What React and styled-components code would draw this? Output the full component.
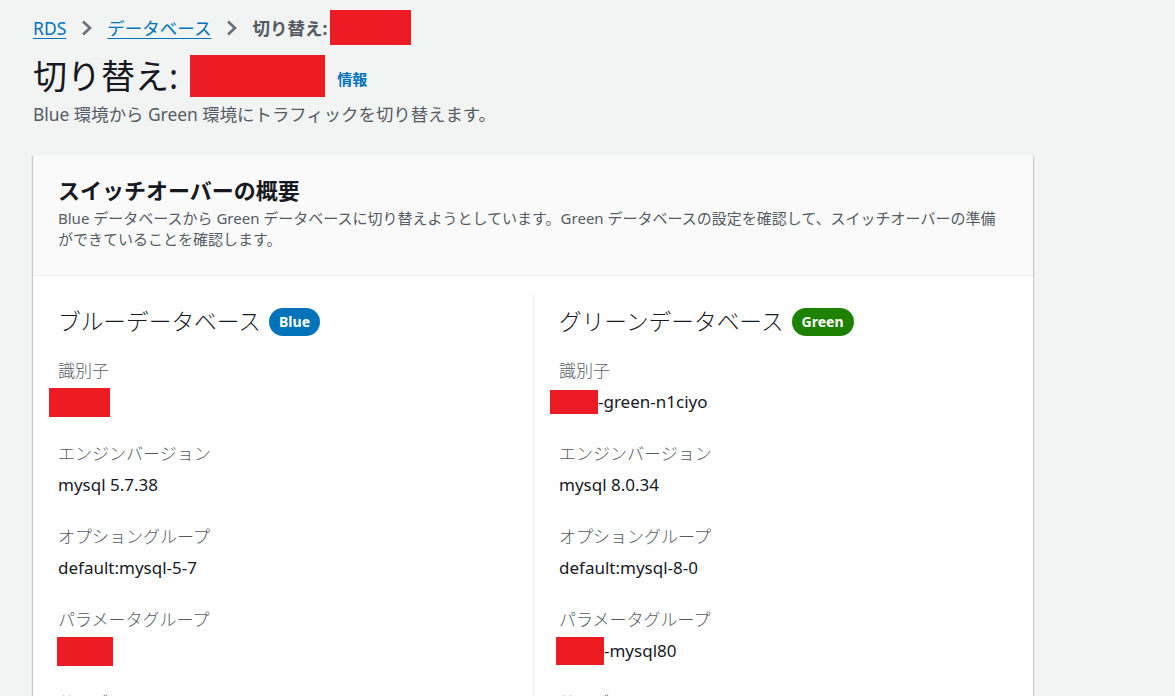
import React from 'react';
import styled, { createGlobalStyle } from 'styled-components';

const GlobalStyle = createGlobalStyle`
  html, body {
    margin: 0;
    padding: 0;
    overflow: hidden;
    background: #f2f3f3;
  }
  body {
    font-family: "Noto Sans", "Noto Sans CJK JP", sans-serif;
    color: #16191f;
  }
`;

const blue = {
  name: 'ブルーデータベース',
  badge: 'Blue',
  tone: '#0073bb',
  fields: [
    { label: '識別子', redact: { w: 61, h: 29, shift: -9 } },
    { label: 'エンジンバージョン', value: 'mysql 5.7.38' },
    { label: 'オプショングループ', value: 'default:mysql-5-7' },
    { label: 'パラメータグループ', redact: { w: 56, h: 29, shift: -1 } },
    { label: 'サイズ', value: 'db.t3.medium' },
  ],
};

const green = {
  name: 'グリーンデータベース',
  badge: 'Green',
  tone: '#1d8102',
  fields: [
    { label: '識別子', redact: { w: 48, h: 24, shift: -9 }, value: '-green-n1ciyo' },
    { label: 'エンジンバージョン', value: 'mysql 8.0.34' },
    { label: 'オプショングループ', value: 'default:mysql-8-0' },
    { label: 'パラメータグループ', redact: { w: 48, h: 28, shift: -3 }, value: '-mysql80' },
    { label: 'サイズ', value: 'db.t3.medium' },
  ],
};

const Chevron = () => (
  <ChevronIcon viewBox="0 0 12 16" width="12" height="16">
    <polyline points="2,1.5 9,8 2,14.5" fill="none" stroke="#687078" strokeWidth="2.6" />
  </ChevronIcon>
);

const Column = ({ db, divided }) => (
  <Col divided={divided}>
    <ColHeading>
      {db.name}
      <Badge tone={db.tone}>{db.badge}</Badge>
    </ColHeading>
    {db.fields.map((f) => (
      <Field key={f.label}>
        <Label>{f.label}</Label>
        <Value>
          {f.redact && <Redact w={f.redact.w} h={f.redact.h} shift={f.redact.shift} />}
          {f.value}
        </Value>
      </Field>
    ))}
  </Col>
);

const App = () => {
  return (
    <Page>
      <GlobalStyle />
      <Breadcrumbs>
        <Crumb href="#">RDS</Crumb>
        <Chevron />
        <Crumb href="#">データベース</Crumb>
        <Chevron />
        <Current>切り替え:</Current>
        <Redact w={81} h={35} shift={3} />
      </Breadcrumbs>
      <TitleRow>
        <Title>切り替え:</Title>
        <Redact w={135} h={42} shift={12} />
        <InfoLink href="#">情報</InfoLink>
      </TitleRow>
      <Subtitle>Blue 環境から Green 環境にトラフィックを切り替えます。</Subtitle>

      <Card>
        <CardHeader>
          <CardTitle>スイッチオーバーの概要</CardTitle>
          <CardDesc>
            Blue データベースから Green データベースに切り替えようとしています。Green
            データベースの設定を確認して、スイッチオーバーの準備ができていることを確認します。
          </CardDesc>
        </CardHeader>
        <CardBody>
          <Column db={blue} />
          <Column db={green} divided />
        </CardBody>
      </Card>
    </Page>
  );
};

export default App;

const Page = styled.div`
  padding: 10px 33px 0;
  height: 686px;
  overflow: hidden;
`;

const Breadcrumbs = styled.nav`
  display: flex;
  align-items: center;
  height: 35px;
  font-size: 17.5px;
`;

const Crumb = styled.a`
  color: #0073bb;
  text-decoration: underline;
  text-underline-offset: 3px;
`;

const ChevronIcon = styled.svg`
  margin: 0 14px 0 15px;
  flex-shrink: 0;
`;

const Current = styled.span`
  color: #545b64;
  font-weight: 700;
`;

const Redact = styled.span`
  display: inline-block;
  flex-shrink: 0;
  width: ${({ w }) => w}px;
  height: ${({ h }) => h}px;
  margin-left: ${({ shift }) => shift || 0}px;
  background: #ed1c24;
`;

const TitleRow = styled.div`
  display: flex;
  align-items: center;
  height: 42px;
  margin-top: 10px;
`;

const Title = styled.h1`
  margin: 0;
  font-size: 34px;
  font-weight: 400;
  line-height: 42px;
  color: #16191f;
`;

const InfoLink = styled.a`
  margin-left: 12px;
  margin-top: 4px;
  font-size: 15px;
  font-weight: 700;
  color: #0073bb;
  text-decoration: none;
`;

const Subtitle = styled.p`
  margin: 5px 0 0;
  font-size: 17.4px;
  line-height: 24px;
  color: #545b64;
`;

const Card = styled.section`
  margin-top: 29px;
  width: 1000px;
  background: #ffffff;
  box-shadow: 0 1px 1px 0 rgba(0, 28, 36, 0.3), 1px 1px 1px 0 rgba(0, 28, 36, 0.15),
    -1px 1px 1px 0 rgba(0, 28, 36, 0.15);
`;

const CardHeader = styled.header`
  background: #fafafa;
  border-bottom: 1px solid #eaeded;
  padding: 20px 25px 25px;
`;

const CardTitle = styled.h2`
  margin: 0;
  font-size: 22px;
  font-weight: 700;
  line-height: 30px;
  color: #16191f;
`;

const CardDesc = styled.p`
  margin: 3px 0 0;
  font-size: 15px;
  line-height: 21px;
  color: #545b64;
`;

const CardBody = styled.div`
  display: grid;
  grid-template-columns: 1fr 1fr;
  padding-top: 19px;
`;

const Col = styled.div`
  padding: 11px 25px 0;
  border-left: ${({ divided }) => (divided ? '1px solid #eaeded' : 'none')};
`;

const ColHeading = styled.h3`
  display: flex;
  align-items: center;
  margin: 0 0 21px;
  font-size: 22.7px;
  font-weight: 300;
  line-height: 32px;
  color: #16191f;
`;

const Badge = styled.span`
  display: inline-flex;
  align-items: center;
  height: 28px;
  margin-left: 8px;
  padding: 0 10px;
  border-radius: 14px;
  background: ${({ tone }) => tone};
  color: #ffffff;
  font-size: 14px;
  font-weight: 700;
`;

const Field = styled.div`
  margin-bottom: 28px;
`;

const Label = styled.div`
  font-size: 17px;
  line-height: 24px;
  color: #545b64;
  font-weight: 300;
`;

const Value = styled.div`
  display: flex;
  align-items: center;
  margin-top: 7px;
  height: 24px;
  font-size: 17px;
  line-height: 24px;
  color: #16191f;
`;
